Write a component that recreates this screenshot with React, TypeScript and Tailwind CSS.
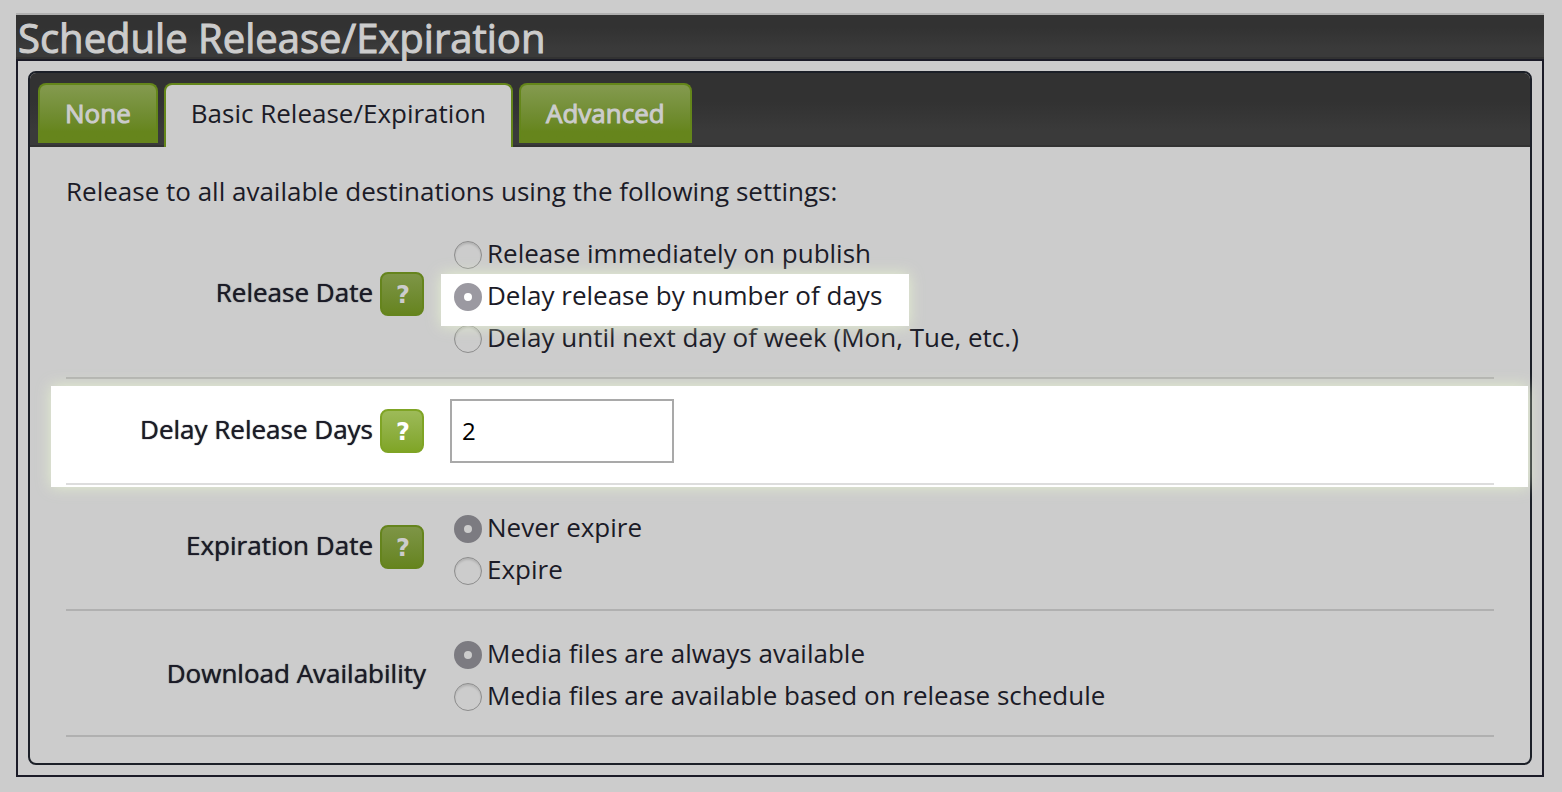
import { useState, type ReactNode } from "react";

const tabs = ["None", "Basic Release/Expiration", "Advanced"];

function Tab({ label, active, onSelect }: { label: string; active: boolean; onSelect: () => void }) {
  const look = active
    ? "h-16 bg-[#ccc] pb-1.5 text-[#1b1b27]"
    : "h-[60px] bg-linear-to-b from-[#82994c] from-5% to-[#66851c] to-80% pb-0.5 text-[#ccc] [-webkit-text-stroke:1px_currentColor]";
  return (
    <button
      type="button"
      role="tab"
      aria-selected={active}
      onClick={onSelect}
      className={`rounded-t-lg border-2 border-b-0 border-[#64861a] px-[25px] ${look}`}
    >
      {label}
    </button>
  );
}

function HelpButton({ topic, lit }: { topic: string; lit?: boolean }) {
  const look = lit
    ? "border-[#7fa425] from-[#9dba58] to-[#80a526] text-white"
    : "border-[#65841d] from-[#7e9546] to-[#66841e] text-[#ccc]";
  return (
    <button
      type="button"
      aria-label={`Help: ${topic}`}
      className={`mr-0.5 flex size-11 items-center justify-center rounded-lg border-2 bg-linear-to-b pt-0.5 pl-0.5 font-['DejaVu_Sans',sans-serif] text-2xl font-bold ${look}`}
    >
      ?
    </button>
  );
}

function Row({
  id,
  label,
  labelFor,
  help,
  lit,
  children,
}: {
  id: string;
  label: string;
  labelFor?: string;
  help?: boolean;
  lit?: boolean;
  children: ReactNode;
}) {
  const Label = labelFor ? "label" : "span";
  return (
    <div className="relative isolate">
      {lit && (
        <span className="absolute top-[7px] -right-[34px] -bottom-0.5 -left-[15px] -z-10 bg-white shadow-[0_0_14px_rgba(240,255,210,0.7)]" />
      )}
      <div className={`flex items-center gap-6 border-b-2 ${lit ? "border-[#ddd]" : "border-[#b0b0b0]"}`}>
        <div className="flex w-[360px] shrink-0 items-center justify-end gap-[7px]">
          <Label id={id} htmlFor={labelFor} className={`[text-shadow:0_0_1px_currentColor] ${help ? "pb-1" : ""}`}>
            {label}
          </Label>
          {help && <HelpButton topic={label} lit={lit} />}
        </div>
        {children}
      </div>
    </div>
  );
}

function RadioList({
  labelledBy,
  options,
  initial,
  litOption,
}: {
  labelledBy: string;
  options: string[];
  initial: number;
  litOption?: number;
}) {
  const [value, setValue] = useState(initial);
  return (
    <div role="radiogroup" aria-labelledby={labelledBy} className="flex flex-col items-start pt-[21px] pb-[19px] pl-1">
      {options.map((option, i) => {
        const lit = i === litOption;
        return (
          <label key={option} className={`flex items-center gap-[5px] leading-[42px] ${lit ? "relative isolate" : ""}`}>
            {lit && (
              <span className="absolute top-0 -right-[27px] -bottom-2.5 -left-[13px] -z-10 bg-white shadow-[0_0_14px_rgba(240,255,210,0.7)]" />
            )}
            <input
              type="radio"
              name={labelledBy}
              checked={value === i}
              onChange={() => setValue(i)}
              className={`mt-1 size-7 appearance-none rounded-full border border-[#8c8c8c] shadow-[inset_0_2px_2px_rgba(0,0,0,0.12)] checked:border-[10px] checked:shadow-none ${
                lit ? "checked:border-[#9b99a1]" : "checked:border-[#7c7b81]"
              }`}
            />
            {option}
          </label>
        );
      })}
    </div>
  );
}

export default function App() {
  const [tab, setTab] = useState(1);
  return (
    <main className="min-h-screen bg-[#ccc] pt-[13px] pr-[18px] pb-[15px] pl-4 font-['Open_Sans',sans-serif] text-[26px] text-[#1b1b27]">
      <section className="border-t-2 border-[#b0b0b0]">
        <h1 className="h-11 border-b-2 border-[#323232] bg-linear-to-b from-[#323232] from-30% to-[#3a3a3a] to-80% px-0.5 text-[40px] leading-[46px] text-[#ccc] [-webkit-text-stroke:1px_currentColor]">
          Schedule Release/Expiration
        </h1>
        <div className="border-2 border-[#1b1b27] p-2.5">
          <div className="rounded-lg border-2 border-[#1b1f27]">
            <div
              role="tablist"
              className="flex h-[74px] items-start gap-1.5 rounded-t-md border-b-2 border-[#323232] bg-linear-to-b from-[#323232] from-40% to-[#3a3a3a] to-80% px-2 pt-2.5"
            >
              {tabs.map((name, i) => (
                <Tab key={name} label={name} active={tab === i} onSelect={() => setTab(i)} />
              ))}
            </div>
            <div role="tabpanel" className="px-9 py-[26px]">
              <p className="mb-0.5 leading-9">Release to all available destinations using the following settings:</p>
              <Row id="release-date" label="Release Date" help>
                <RadioList
                  labelledBy="release-date"
                  options={[
                    "Release immediately on publish",
                    "Delay release by number of days",
                    "Delay until next day of week (Mon, Tue, etc.)",
                  ]}
                  initial={1}
                  litOption={1}
                />
              </Row>
              <Row id="delay-days-label" label="Delay Release Days" labelFor="delay-days" help lit>
                <div className="py-5">
                  <input
                    id="delay-days"
                    type="text"
                    defaultValue="2"
                    className="block h-16 w-56 border-2 border-[#a9a9a9] bg-white px-2.5 pb-0.5 text-2xl text-black"
                  />
                </div>
              </Row>
              <Row id="expiration-date" label="Expiration Date" help>
                <RadioList labelledBy="expiration-date" options={["Never expire", "Expire"]} initial={0} />
              </Row>
              <Row id="download-availability" label="Download Availability">
                <RadioList
                  labelledBy="download-availability"
                  options={["Media files are always available", "Media files are available based on release schedule"]}
                  initial={0}
                />
              </Row>
            </div>
          </div>
        </div>
      </section>
    </main>
  );
}
